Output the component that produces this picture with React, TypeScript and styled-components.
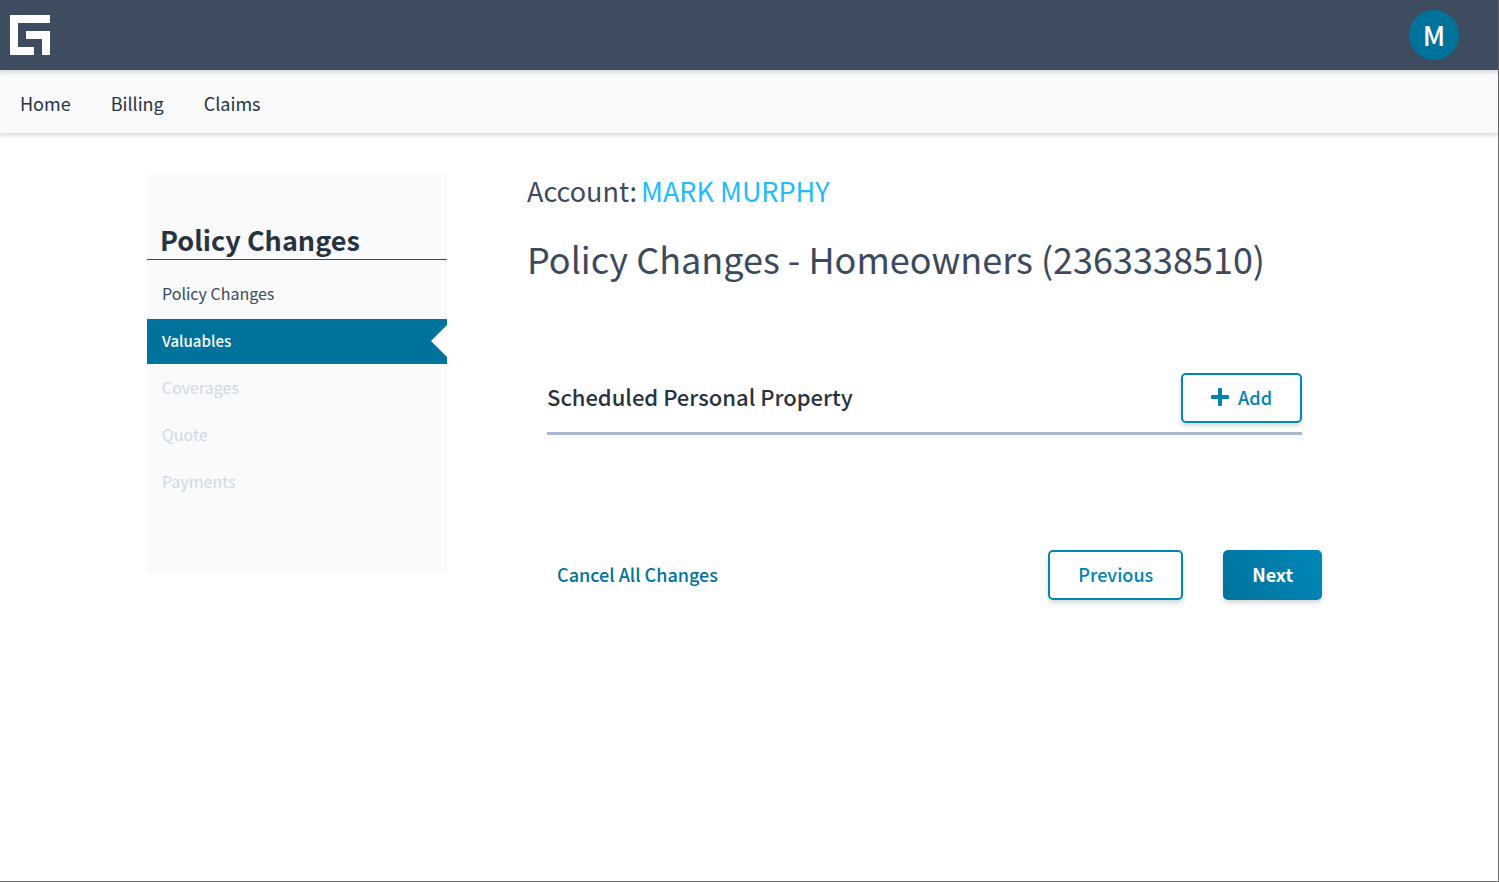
import React from "react";
import styled, { createGlobalStyle } from "styled-components";

const GlobalStyle = createGlobalStyle`
  *, *::before, *::after { box-sizing: border-box; }
  body {
    margin: 0;
    background: #ffffff;
    color: #3c4a5d;
    font-family: "Noto Sans CJK SC", "Noto Sans", sans-serif;
  }
  button { font-family: inherit; cursor: pointer; }
`;

const Page = styled.div`
  min-height: 100vh;
  border: solid #6b6b6b;
  border-width: 0 1px 1px 0;
`;

const TopBar = styled.header`
  position: relative;
  z-index: 2;
  display: flex;
  align-items: center;
  justify-content: space-between;
  height: 70px;
  padding: 0 39px 0 10px;
  background: #3d4c5f;
  box-shadow: 0 1px 5px 1px rgba(0, 0, 0, 0.17);
`;

const HomeLogo = styled.a`
  display: flex;
`;

const Avatar = styled.button`
  width: 50px;
  height: 50px;
  padding: 0;
  border: 0;
  border-radius: 50%;
  background: #00739d;
  color: #ffffff;
  font-size: 27px;
  font-weight: 500;
  line-height: 50px;
`;

const NavBar = styled.nav`
  display: flex;
  align-items: center;
  gap: 40px;
  height: 63px;
  padding: 3px 20px 0;
  background: #f8fafc;
  box-shadow: 0 1px 5px 1px rgba(0, 0, 0, 0.17);
`;

const NavLink = styled.a`
  color: #28333f;
  font-size: 18px;
  line-height: 24px;
  text-decoration: none;
`;

const Content = styled.div`
  display: flex;
  align-items: flex-start;
  gap: 80px;
  max-width: 1204px;
  margin: 0 auto;
  padding-top: 40px;
`;

const Sidebar = styled.aside`
  flex: 0 0 300px;
  padding: 50px 0;
  border-radius: 5px;
  background: #f8fafc;
`;

const SidebarTitle = styled.h2`
  margin: 0 0 12px;
  padding: 0 13px 2px;
  border-bottom: 1px solid #3c4a5d;
  color: #28333f;
  font-size: 27px;
  font-weight: 700;
  line-height: 34px;
`;

const StepList = styled.ol`
  margin: 0;
  padding: 0 0 17px;
  list-style: none;
`;

const Step = styled.li`
  margin-bottom: 2px;
`;

const StepButton = styled.button<{ $active?: boolean }>`
  position: relative;
  display: block;
  width: 100%;
  height: 45px;
  padding: 0 15px 2px;
  border: 0;
  background: ${(p) => (p.$active ? "#00739d" : "transparent")};
  color: ${(p) => (p.$active ? "#ffffff" : "#3c4a5d")};
  font-size: ${(p) => (p.$active ? "15px" : "16px")};
  font-weight: ${(p) => (p.$active ? 500 : 400)};
  line-height: 43px;
  text-align: left;

  &:disabled {
    color: #d0d9e3;
    cursor: default;
  }

  &::after {
    content: "";
    display: ${(p) => (p.$active ? "block" : "none")};
    position: absolute;
    top: 6px;
    right: 0;
    border: solid transparent;
    border-width: 16px 16px 16px 0;
    border-right-color: #ffffff;
  }
`;

const Main = styled.main`
  flex: 1;
  min-width: 0;
  padding-right: 29px;
`;

const Account = styled.div`
  display: flex;
  flex-wrap: wrap;
  gap: 4px;
  margin-bottom: 25px;
  font-size: 27px;
  line-height: 36px;
`;

const AccountLink = styled.a`
  color: #22bbff;
  text-decoration: none;
`;

const PageTitle = styled.h1`
  margin: 0;
  font-size: 36px;
  font-weight: 400;
  line-height: 48px;
`;

const Section = styled.section`
  margin: 91px 20px 0;
`;

const SectionHeader = styled.div`
  display: flex;
  align-items: center;
  justify-content: space-between;
  padding-bottom: 9px;
  border-bottom: 3px solid #abb8cc;
`;

const SectionTitle = styled.h3`
  margin: 0;
  padding-bottom: 4px;
  color: #28333f;
  font-size: 22px;
  font-weight: 500;
  line-height: 32px;
`;

const Button = styled.button<{ $primary?: boolean }>`
  display: flex;
  align-items: center;
  gap: 9px;
  height: 50px;
  padding: ${(p) => (p.$primary ? "0 29px 2px" : "0 28px 2px")};
  border: ${(p) => (p.$primary ? "0" : "2px solid #0086b7")};
  border-radius: 5px;
  background: ${(p) =>
    p.$primary ? "linear-gradient(60deg, #00739d, #0088b9)" : "#ffffff"};
  box-shadow: 0 3px 5px rgba(0, 0, 0, 0.16);
  color: ${(p) => (p.$primary ? "#ffffff" : "#0083b3")};
  font-size: 18px;
  font-weight: ${(p) => (p.$primary ? 700 : 500)};
  line-height: 24px;
`;

const Actions = styled.div`
  display: flex;
  align-items: center;
  justify-content: space-between;
  margin-top: 115px;
  padding-left: 30px;
`;

const StepActions = styled.div`
  display: flex;
  gap: 40px;
`;

const TextButton = styled.button`
  padding: 0 0 2px;
  border: 0;
  background: none;
  color: #00739d;
  font-size: 18px;
  font-weight: 500;
  line-height: 24px;
`;

const Logo = () => (
  <svg width="40" height="40" viewBox="0 0 40 40" fill="#ffffff" aria-hidden="true">
    <path d="M0 0H40V8H8V32H24V40H0Z" />
    <path d="M16 16H40V40H32V24H16Z" />
  </svg>
);

const PlusIcon = () => (
  <svg width="18" height="18" viewBox="0 0 18 18" fill="currentColor" aria-hidden="true">
    <rect x="7" y="0" width="4" height="18" rx="1" />
    <rect x="0" y="7" width="18" height="4" rx="1" />
  </svg>
);

const navItems = ["Home", "Billing", "Claims"];

const steps = [
  { label: "Policy Changes" },
  { label: "Valuables", active: true },
  { label: "Coverages", disabled: true },
  { label: "Quote", disabled: true },
  { label: "Payments", disabled: true },
];

export default function App() {
  return (
    <Page>
      <GlobalStyle />
      <TopBar>
        <HomeLogo href="#" aria-label="Home page">
          <Logo />
        </HomeLogo>
        <Avatar type="button">M</Avatar>
      </TopBar>
      <NavBar>
        {navItems.map((item) => (
          <NavLink key={item} href="#">
            {item}
          </NavLink>
        ))}
      </NavBar>
      <Content>
        <Sidebar>
          <SidebarTitle>Policy Changes</SidebarTitle>
          <StepList>
            {steps.map((step) => (
              <Step key={step.label}>
                <StepButton type="button" $active={step.active} disabled={step.disabled}>
                  {step.label}
                </StepButton>
              </Step>
            ))}
          </StepList>
        </Sidebar>
        <Main>
          <Account>
            <span>Account:</span>
            <AccountLink href="#">MARK MURPHY</AccountLink>
          </Account>
          <PageTitle>Policy Changes - Homeowners (2363338510)</PageTitle>
          <Section>
            <SectionHeader>
              <SectionTitle>Scheduled Personal Property</SectionTitle>
              <Button type="button">
                <PlusIcon />
                Add
              </Button>
            </SectionHeader>
          </Section>
          <Actions>
            <TextButton type="button">Cancel All Changes</TextButton>
            <StepActions>
              <Button type="button">Previous</Button>
              <Button type="button" $primary>
                Next
              </Button>
            </StepActions>
          </Actions>
        </Main>
      </Content>
    </Page>
  );
}
